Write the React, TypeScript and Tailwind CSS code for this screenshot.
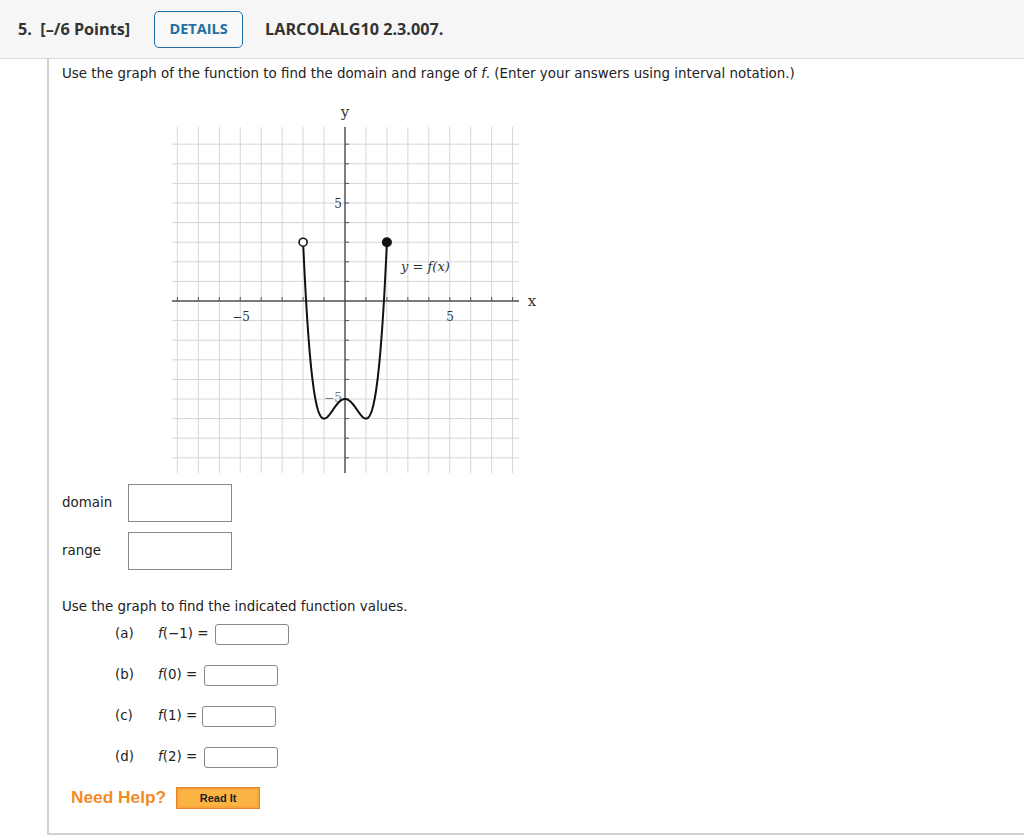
import React from "react";

// graph geometry in page pixels
const OX = 343;
const OY = 301;
const SX = 20.95;
const SY = 19.6;

const px = (x: number) => OX + x * SX;
const py = (y: number) => OY - y * SY;

const f = (x: number) => x ** 4 - 2 * x * x - 5;

function curvePath() {
  const pts: string[] = [];
  for (let i = 0; i <= 200; i++) {
    const x = -2 + (4 * i) / 200;
    pts.push(`${i === 0 ? "M" : "L"}${px(x).toFixed(2)},${py(f(x)).toFixed(2)}`);
  }
  return pts.join(" ");
}

function Graph() {
  const units = Array.from({ length: 17 }, (_, i) => i - 8);
  return (
    <svg width={380} height={380} viewBox="160 100 380 380" className="block">
      {units.map((k) => (
        <line key={`v${k}`} x1={px(k)} x2={px(k)} y1={127} y2={473} stroke="#d6d6d6" strokeWidth={1} />
      ))}
      {units.map((k) => (
        <line key={`h${k}`} x1={170} x2={517} y1={py(k)} y2={py(k)} stroke="#d6d6d6" strokeWidth={1} />
      ))}
      <line x1={170} x2={517} y1={OY} y2={OY} stroke="#555" strokeWidth={1.3} />
      <line x1={OX} x2={OX} y1={127} y2={473} stroke="#444" strokeWidth={1.3} />
      {units.map((k) =>
        k === 0 ? null : (
          <g key={`t${k}`}>
            <line x1={px(k)} x2={px(k)} y1={OY - 4} y2={OY} stroke="#555" strokeWidth={1} />
            <line x1={OX} x2={OX + 4} y1={py(k)} y2={py(k)} stroke="#555" strokeWidth={1} />
          </g>
        )
      )}
      <g fontFamily="'DejaVu Serif', 'Liberation Serif', serif" fill="#333">
        <text x={530} y={306} fontSize={15} textAnchor="middle">x</text>
        <text x={343} y={117} fontSize={15} textAnchor="middle">y</text>
        <text x={239} y={321} fontSize={12} textAnchor="middle">−5</text>
        <text x={448} y={321} fontSize={12} textAnchor="middle">5</text>
        <text x={340} y={208} fontSize={12} textAnchor="end">5</text>
        <text x={340} y={402} fontSize={12} textAnchor="end" fill="#777">−5</text>
        <text x={399} y={271} fontSize={13} fontStyle="italic">y = f(x)</text>
      </g>
      <path d={curvePath()} fill="none" stroke="#111" strokeWidth={2} />
      <circle cx={px(-2)} cy={py(3)} r={4} fill="#fff" stroke="#111" strokeWidth={1.6} />
      <circle cx={px(2)} cy={py(3)} r={5} fill="#111" />
    </svg>
  );
}

function ValueRow({ tag, label, width }: { tag: string; label: React.ReactNode; width: number }) {
  return (
    <div className="h-[41px] flex items-center">
      <span className="w-[43px] ml-[53px]">{tag}</span>
      <span className="whitespace-nowrap" style={{ width }}>{label}</span>
      <span className="inline-block w-[74px] h-[21px] border border-[#888] rounded-[3px] bg-white" />
    </div>
  );
}

export default function App() {
  return (
    <div className="w-[1024px] h-[840px] bg-white text-[#222] font-['DejaVu_Sans','Verdana',sans-serif] text-[13.4px]">
      <div className="h-[59px] bg-[#f6f6f6] border-b border-[#dcdcdc] flex items-center pl-[18px] font-['Open_Sans',sans-serif] font-bold text-[16.2px] text-[#333]">
        <span>5.&nbsp; [–/6 Points]</span>
        <span className="ml-[24px] w-[89px] h-[37px] border-[1.5px] border-[#1f6fa3] rounded-[5px] flex items-center justify-center text-[#1f6fa3] text-[14.5px] bg-white/40">
          DETAILS
        </span>
        <span className="ml-[22px]">LARCOLALG10 2.3.007.</span>
      </div>
      <div className="ml-[47px] h-[776px] border-l-2 border-b-2 border-[#d2d2d2] pl-[13px]">
        <p className="pt-[7px] leading-[16px]">
          Use the graph of the function to find the domain and range of <i>f</i>. (Enter your answers using interval notation.)
        </p>
        <div className="ml-[100px] mt-[18px]">
          <Graph />
        </div>
        <div className="mt-[4px] flex items-center h-[38px]">
          <span className="w-[66px]">domain</span>
          <span className="w-[104px] h-[38px] border border-[#888]" />
        </div>
        <div className="mt-[10px] flex items-center h-[38px]">
          <span className="w-[66px]">range</span>
          <span className="w-[104px] h-[38px] border border-[#888]" />
        </div>
        <p className="mt-[29px] leading-[16px]">Use the graph to find the indicated function values.</p>
        <div className="-mt-[1px]">
          <ValueRow tag="(a)" label={<><i>f</i>(−1) =</>} width={57} />
          <ValueRow tag="(b)" label={<><i>f</i>(0) =</>} width={46} />
          <ValueRow tag="(c)" label={<><i>f</i>(1) =</>} width={44} />
          <ValueRow tag="(d)" label={<><i>f</i>(2) =</>} width={46} />
        </div>
        <div className="flex items-center mt-[7px] ml-[9px]">
          <span className="font-['Liberation_Sans',Arial,sans-serif] font-bold text-[17.3px] text-[#f28b26]">Need Help?</span>
          <span className="ml-[10px] w-[84px] h-[22px] bg-[#fbb444] border border-[#e0852a] flex items-center justify-center shadow-[inset_0_0_0_2px_#f7a43a]">
            <span className="font-['Liberation_Sans',Arial,sans-serif] font-bold text-[11px] text-[#222]">Read It</span>
          </span>
        </div>
      </div>
    </div>
  );
}
